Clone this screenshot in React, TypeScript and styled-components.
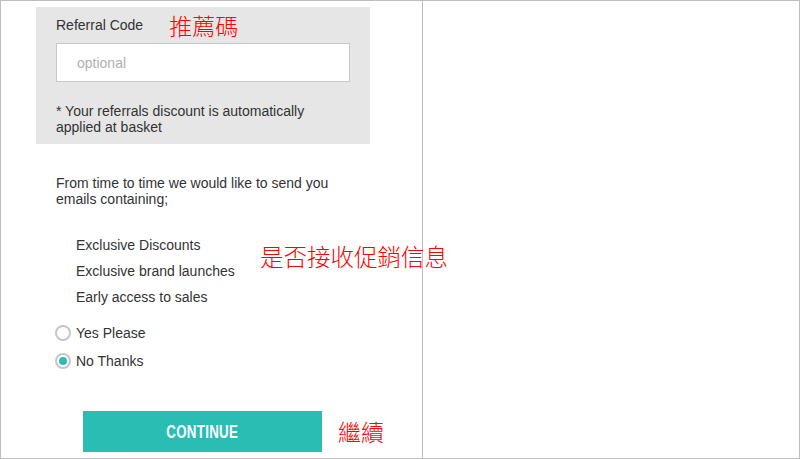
import React from "react";
import styled, { createGlobalStyle } from "styled-components";

const Global = createGlobalStyle`
  html, body { margin: 0; padding: 0; background: #fff; }
  * { box-sizing: border-box; }
  body { font-family: "Liberation Sans", Arial, sans-serif; color: #333; font-size: 14px; }
`;

const Frame = styled.div`
  position: relative;
  width: 800px;
  height: 459px;
  border: 1px solid #bdbdbd;
  display: flex;
  overflow: hidden;
`;

const LeftCol = styled.div`
  width: 422px;
  height: 100%;
  border-right: 1px solid #bdbdbd;
  padding: 6px 0 0 35px;
  display: flex;
  flex-direction: column;
`;

const Panel = styled.div`
  width: 334px;
  height: 137px;
  background: #e6e6e6;
  padding: 8px 20px 0 20px;
  display: flex;
  flex-direction: column;
`;

const LabelRow = styled.div`
  display: flex;
  align-items: center;
  height: 20px;
  gap: 26px;
`;

const Label = styled.span`
  font-size: 14px;
  line-height: 20px;
  color: #333;
`;

const Note = styled.span<{ $size?: number }>`
  font-family: "Noto Sans CJK TC", "Noto Sans CJK SC", sans-serif;
  font-size: ${(p) => p.$size ?? 23}px;
  font-weight: 300;
  line-height: 1;
  color: #ff0000;
  white-space: nowrap;
`;

const FloatingNote = styled(Note)`
  position: absolute;
  left: 259px;
  top: 244px;
`;

const Input = styled.input`
  margin-top: 8px;
  width: 294px;
  height: 39px;
  border: 1px solid #c8c8c8;
  background: #fff;
  padding: 0 0 0 20px;
  font-family: "Liberation Sans", Arial, sans-serif;
  font-size: 14px;
  color: #333;
  outline: none;
  &::placeholder { color: #b0b0b0; }
`;

const SmallText = styled.p`
  margin: 21px 0 0 0;
  font-size: 14px;
  line-height: 16px;
  color: #333;
`;

const Body = styled.div`
  padding-left: 20px;
  display: flex;
  flex-direction: column;
`;

const Intro = styled.p`
  margin: 31px 0 0 0;
  width: 290px;
  font-size: 14px;
  line-height: 16px;
  color: #333;
`;

const List = styled.ul`
  list-style: none;
  margin: 25px 0 0 0;
  padding: 0 0 0 20px;
`;

const Item = styled.li`
  font-size: 14px;
  line-height: 26px;
  color: #333;
`;

const Radios = styled.div`
  margin-top: 9px;
  margin-left: -1px;
  display: flex;
  flex-direction: column;
`;

const RadioRow = styled.label`
  display: flex;
  align-items: center;
  height: 28px;
  gap: 5px;
  font-size: 14px;
  color: #333;
  cursor: pointer;
`;

const RadioCircle = styled.span<{ $checked?: boolean }>`
  width: 16px;
  height: 16px;
  border-radius: 50%;
  border: 2px solid #c6c6c6;
  background: #fff;
  display: flex;
  align-items: center;
  justify-content: center;
  &::after {
    content: "";
    width: 8px;
    height: 8px;
    border-radius: 50%;
    background: ${(p) => (p.$checked ? "#29bdb4" : "transparent")};
  }
`;

const ActionRow = styled.div`
  margin-top: 36px;
  margin-left: 47px;
  display: flex;
  align-items: center;
  gap: 16px;
`;

const Button = styled.button`
  width: 239px;
  height: 41px;
  border: none;
  background: #29bdb4;
  color: #fff;
  padding: 0;
  cursor: pointer;
  display: flex;
  align-items: center;
  justify-content: center;
`;

const ButtonLabel = styled.span`
  display: inline-block;
  font-family: "Liberation Sans", Arial, sans-serif;
  font-weight: 700;
  font-size: 19px;
  letter-spacing: 0.4px;
  transform: scaleX(0.7);
`;

export default function App() {
  const [choice, setChoice] = React.useState<"yes" | "no">("no");
  return (
    <>
      <Global />
      <Frame>
        <LeftCol>
          <Panel>
            <LabelRow>
              <Label>Referral Code</Label>
              <Note>推薦碼</Note>
            </LabelRow>
            <Input placeholder="optional" />
            <SmallText>* Your referrals discount is automatically applied at basket</SmallText>
          </Panel>
          <Body>
            <Intro>From time to time we would like to send you emails containing;</Intro>
            <List>
              <Item>Exclusive Discounts</Item>
              <Item>Exclusive brand launches</Item>
              <Item>Early access to sales</Item>
            </List>
            <Radios>
              <RadioRow onClick={() => setChoice("yes")}>
                <RadioCircle $checked={choice === "yes"} />
                Yes Please
              </RadioRow>
              <RadioRow onClick={() => setChoice("no")}>
                <RadioCircle $checked={choice === "no"} />
                No Thanks
              </RadioRow>
            </Radios>
          </Body>
          <ActionRow>
            <Button>
              <ButtonLabel>CONTINUE</ButtonLabel>
            </Button>
            <Note>繼續</Note>
          </ActionRow>
        </LeftCol>
        <FloatingNote $size={23.5}>是否接收促銷信息</FloatingNote>
      </Frame>
    </>
  );
}
